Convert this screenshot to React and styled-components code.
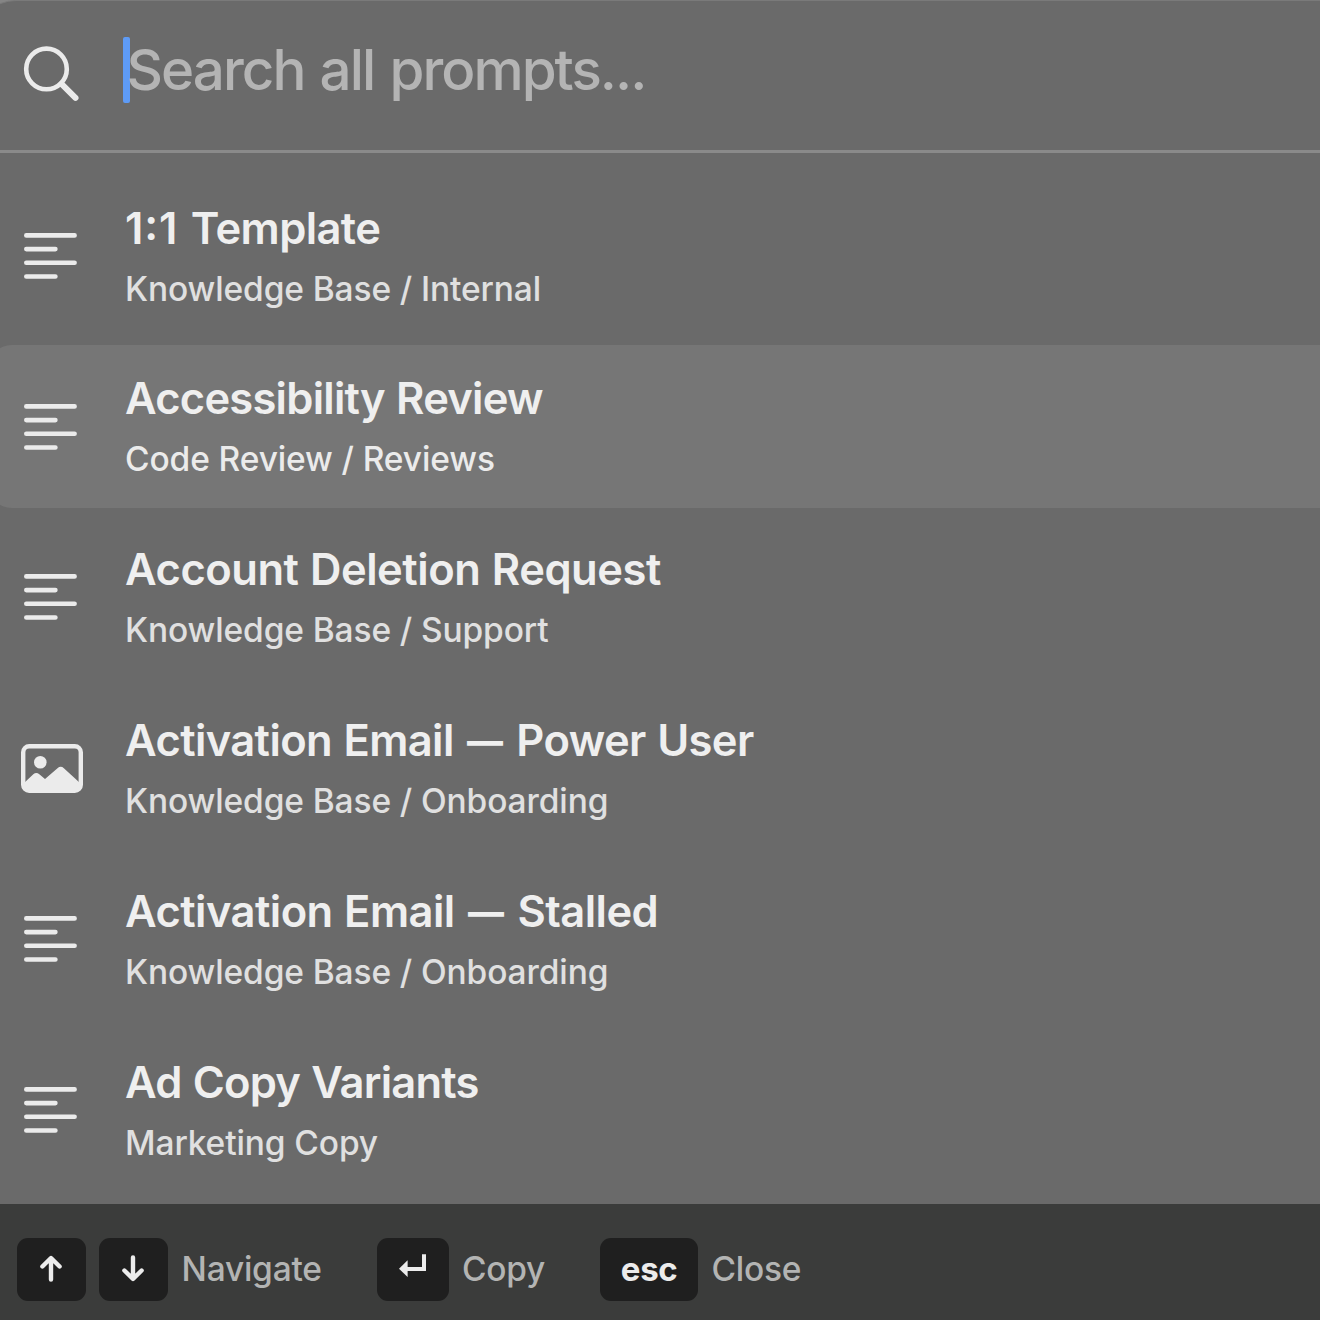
import React from 'react';
import styled, { createGlobalStyle } from 'styled-components';

const prompts = [
    { title: '1:1 Template', path: 'Knowledge Base / Internal', type: 'text', tracking: -0.6 },
    { title: 'Accessibility Review', path: 'Code Review / Reviews', type: 'text', tracking: -0.76 },
    { title: 'Account Deletion Request', path: 'Knowledge Base / Support', type: 'text', tracking: -0.47 },
    { title: 'Activation Email — Power User', path: 'Knowledge Base / Onboarding', type: 'image', tracking: -0.6 },
    { title: 'Activation Email — Stalled', path: 'Knowledge Base / Onboarding', type: 'text', tracking: -0.54 },
    { title: 'Ad Copy Variants', path: 'Marketing Copy', type: 'text', tracking: -0.8 },
];

function SearchIcon() {
    return (
        <svg width="60" height="60" viewBox="0 0 60 60" fill="none" stroke="#ebebeb" strokeLinecap="round">
            <circle cx="26.5" cy="26.9" r="20.3" strokeWidth="4.6" />
            <path d="M41.5 41.9L55.5 55.9" strokeWidth="6" />
        </svg>
    );
}

function TextIcon() {
    return (
        <svg width="54" height="48" viewBox="0 0 54 48" fill="none" stroke="#ebebeb" strokeWidth="4.6" strokeLinecap="round">
            <path d="M2.3 3.4H50.6M2.3 17.1H31.4M2.3 30.8H50.6M2.3 44.5H31.4" />
        </svg>
    );
}

function ImageIcon() {
    return (
        <svg width="64" height="49" viewBox="-2 0 64 49">
            <rect x="2.2" y="2.2" width="57.6" height="44.6" rx="6" fill="none" stroke="#ebebeb" strokeWidth="4.4" />
            <circle cx="19.3" cy="18.3" r="6.3" fill="#ebebeb" />
            <path d="M3 39L12.3 30.2Q15.3 27.8 18.3 30.2L24 35L36.5 24.2Q39.7 21.4 42.9 24.2L59 39V42Q59 47 54 47H8Q3 47 3 42Z" fill="#ebebeb" />
        </svg>
    );
}

function ArrowIcon({ down }) {
    return (
        <svg width="26" height="28" viewBox="0 0 26 28" fill="none" stroke="#ececec" strokeWidth="4.4" strokeLinecap="round" strokeLinejoin="round">
            <path d={down ? 'M12 2.5V23.5M3.4 15.5L12 24L20.6 15.5' : 'M12 24.5V3.5M3.4 11.5L12 3L20.6 11.5'} />
        </svg>
    );
}

function ReturnIcon() {
    return (
        <svg width="28" height="32" viewBox="0 0 28 32">
            <path d="M25 1.3V16H8" fill="none" stroke="#ececec" strokeWidth="4" />
            <path d="M0 15.7L8.6 7.3V24.1Z" fill="#ececec" />
        </svg>
    );
}

function TitleWord({ word }) {
    if (word === '—') return <Dash>{word}</Dash>;
    if (word.includes(':')) return <Ratio>{word}</Ratio>;
    return word;
}

function App() {
    return (
        <Window>
            <GlobalStyle />
            <Palette>
                <SearchBar>
                    <SearchIcon />
                    <SearchField>
                        <Caret />
                        <Placeholder>Search all prompts...</Placeholder>
                    </SearchField>
                </SearchBar>
                <PromptList>
                    {prompts.map((prompt, index) => (
                        <PromptRow key={prompt.title} $selected={index === 1}>
                            <IconCell>{prompt.type === 'image' ? <ImageIcon /> : <TextIcon />}</IconCell>
                            <div>
                                <Title $tracking={prompt.tracking}>
                                    {prompt.title.split(' ').map((word, i) => (
                                        <React.Fragment key={i}>
                                            {i > 0 && ' '}
                                            <TitleWord word={word} />
                                        </React.Fragment>
                                    ))}
                                </Title>
                                <Path $selected={index === 1}>{prompt.path}</Path>
                            </div>
                        </PromptRow>
                    ))}
                </PromptList>
                <Footer>
                    <Hint>
                        <Key $width={69}><ArrowIcon /></Key>
                        <Key $width={69}><ArrowIcon down /></Key>
                        <HintText>Navigate</HintText>
                    </Hint>
                    <Hint>
                        <Key $width={72}><ReturnIcon /></Key>
                        <HintText>Copy</HintText>
                    </Hint>
                    <Hint>
                        <Key $width={98}>esc</Key>
                        <HintText>Close</HintText>
                    </Hint>
                </Footer>
            </Palette>
        </Window>
    );
}

const GlobalStyle = createGlobalStyle`
    * {
        box-sizing: border-box;
    }

    body {
        margin: 0;
        font-family: Inter, sans-serif;
    }
`;

const Window = styled.div`
    width: 1320px;
    height: 1320px;
    overflow: hidden;
    background-color: #858585;
`;

const Palette = styled.div`
    display: flex;
    flex-direction: column;
    height: 1320px;
    margin-left: -24px;
    padding-left: 24px;
    overflow: hidden;
    border-top: 1px solid #7a7a7a;
    border-top-left-radius: 40px;
    background-color: #6a6a6a;
`;

const SearchBar = styled.div`
    display: flex;
    align-items: flex-start;
    flex-shrink: 0;
    height: 152px;
    padding: 41px 0 0 20px;
    border-bottom: 3px solid #8a8a8a;
`;

const SearchField = styled.div`
    display: flex;
    align-items: center;
    height: 66px;
    margin: -5px 0 0 42.5px;
`;

const Caret = styled.span`
    width: 7px;
    height: 66px;
    border-radius: 2px;
    background-color: #5e9bf6;
`;

const Placeholder = styled.span`
    margin-left: -3px;
    padding-bottom: 2px;
    color: #b4b4b4;
    font-size: 56.5px;
    font-weight: 460;
    letter-spacing: -1.95px;
    white-space: nowrap;
    word-spacing: 2px;
`;

const PromptList = styled.div`
    display: flex;
    flex-direction: column;
    flex: 1;
    gap: 7.8px;
    padding-top: 21.3px;
`;

const PromptRow = styled.div`
    display: flex;
    flex-shrink: 0;
    height: 163px;
    margin-left: -12px;
    padding-left: 12px;
    border-radius: 24px 0 0 24px;
    background-color: ${(props) => (props.$selected ? '#767676' : 'transparent')};
`;

const IconCell = styled.div`
    display: flex;
    justify-content: center;
    align-items: center;
    width: 103px;
    height: 163px;
    margin-right: 22px;
    padding: 0 1px 0 0;
`;

const Title = styled.div`
    margin-top: 26.3px;
    color: #efefef;
    font-size: 43.5px;
    font-weight: 600;
    letter-spacing: ${(props) => props.$tracking}px;
    line-height: 54px;
    white-space: nowrap;
    word-spacing: 1px;
`;

const Dash = styled.span`
    position: relative;
    top: -2px;
    padding: 0 2.5px 0 2px;
    font-size: 36px;
    font-weight: 800;
    line-height: 1;
`;

const Ratio = styled.span`
    margin-right: 1px;
    letter-spacing: 0.9px;
    font-feature-settings: 'case';
`;

const Path = styled.div`
    margin-top: 13px;
    color: ${(props) => (props.$selected ? '#ebebeb' : '#e0e0e0')};
    font-size: 33.5px;
    font-weight: 500;
    letter-spacing: -0.11px;
    line-height: 42px;
    white-space: nowrap;
`;

const Footer = styled.div`
    display: flex;
    align-items: center;
    flex-shrink: 0;
    gap: 55px;
    height: 116px;
    padding: 14px 0 0 17px;
    background-color: #3b3c3b;
`;

const Hint = styled.div`
    display: flex;
    align-items: center;
    gap: 13.3px;
`;

const Key = styled.div`
    display: flex;
    justify-content: center;
    align-items: center;
    width: ${(props) => props.$width}px;
    height: 63px;
    border-radius: 11px;
    background-color: #1f1f1f;
    color: #ececec;
    font-size: 33px;
    font-weight: 650;
    letter-spacing: -0.3px;
`;

const HintText = styled.span`
    color: #b3b4b3;
    font-size: 33.5px;
    font-weight: 480;
    letter-spacing: -0.25px;
    white-space: nowrap;
`;

export default App;
